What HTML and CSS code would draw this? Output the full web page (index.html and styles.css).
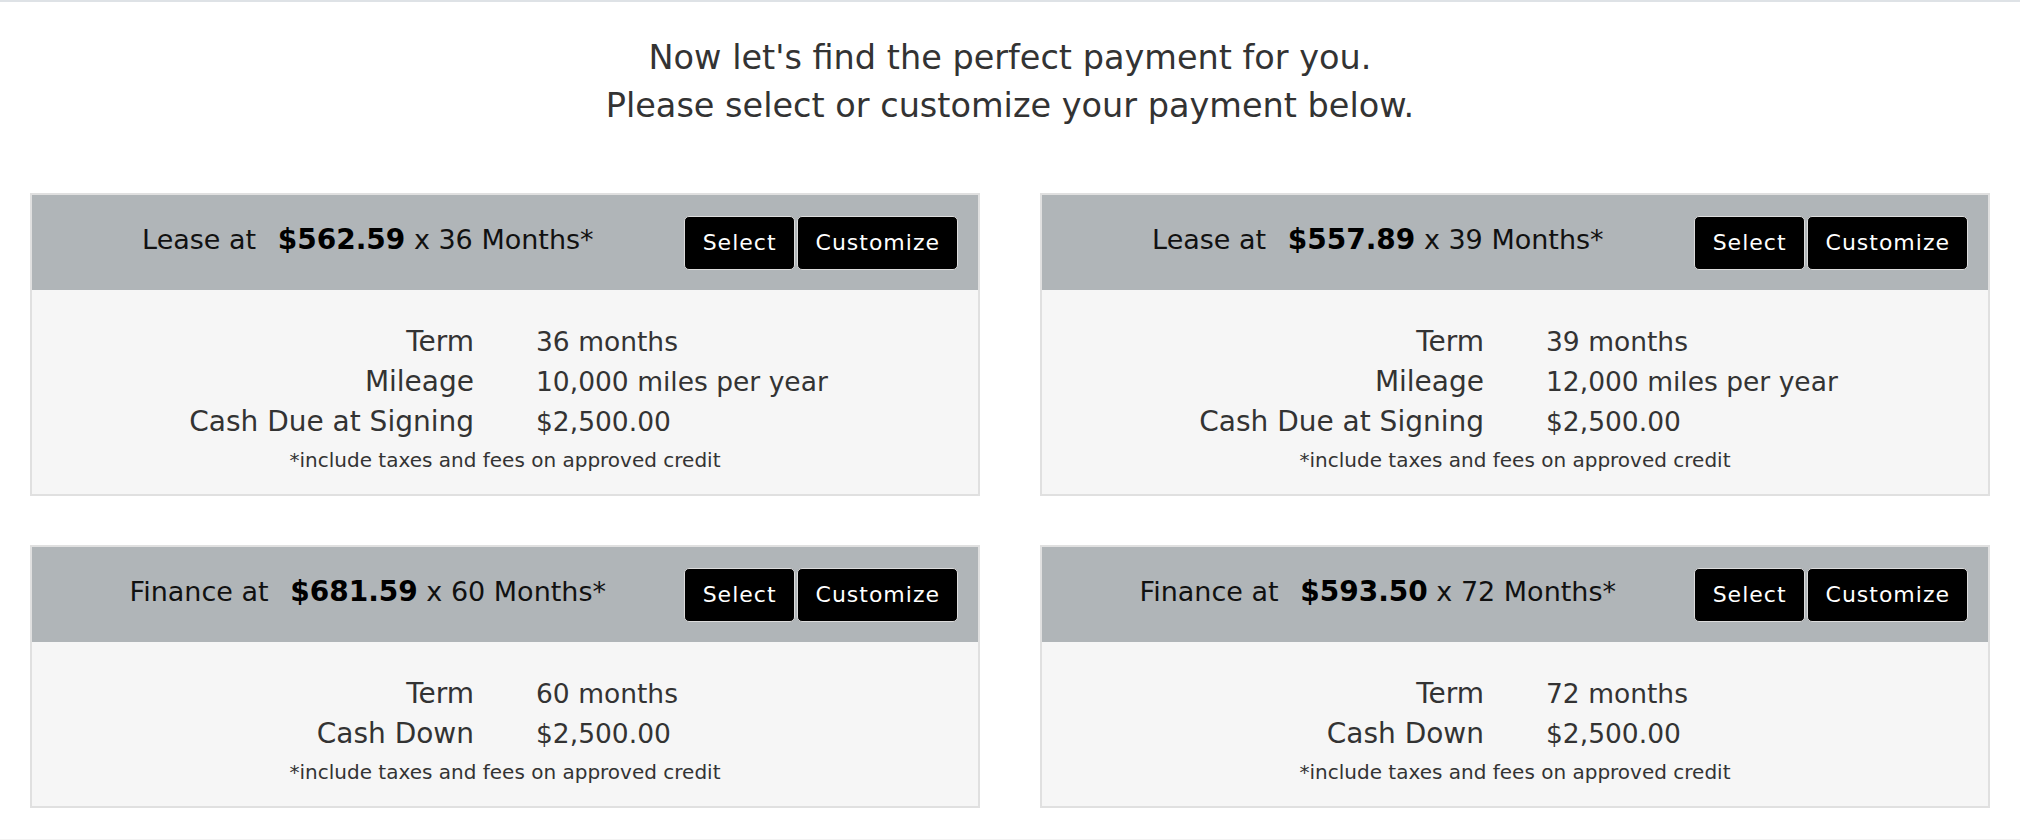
FILE: index.html
```html
<!DOCTYPE html>
<html>
<head>
  <meta charset="utf-8">
  <title>Payment Options</title>
  <link rel="stylesheet" href="styles.css">
</head>
<body>
  <main class="page">
    <h1 class="intro">Now let's find the perfect payment for you.<br>Please select or customize your payment below.</h1>

    <section class="plans">
      <article class="plan">
        <header class="plan-head">
          <div class="plan-title">Lease at <strong class="price">$562.59</strong> x 36 Months*</div>
          <div class="plan-actions">
            <button class="btn">Select</button>
            <button class="btn">Customize</button>
          </div>
        </header>
        <div class="plan-body">
          <dl class="terms">
            <dt>Term</dt><dd>36 months</dd>
            <dt>Mileage</dt><dd>10,000 miles per year</dd>
            <dt>Cash Due at Signing</dt><dd>$2,500.00</dd>
          </dl>
          <p class="note">*include taxes and fees on approved credit</p>
        </div>
      </article>

      <article class="plan">
        <header class="plan-head">
          <div class="plan-title">Lease at <strong class="price">$557.89</strong> x 39 Months*</div>
          <div class="plan-actions">
            <button class="btn">Select</button>
            <button class="btn">Customize</button>
          </div>
        </header>
        <div class="plan-body">
          <dl class="terms">
            <dt>Term</dt><dd>39 months</dd>
            <dt>Mileage</dt><dd>12,000 miles per year</dd>
            <dt>Cash Due at Signing</dt><dd>$2,500.00</dd>
          </dl>
          <p class="note">*include taxes and fees on approved credit</p>
        </div>
      </article>

      <article class="plan">
        <header class="plan-head">
          <div class="plan-title">Finance at <strong class="price">$681.59</strong> x 60 Months*</div>
          <div class="plan-actions">
            <button class="btn">Select</button>
            <button class="btn">Customize</button>
          </div>
        </header>
        <div class="plan-body">
          <dl class="terms">
            <dt>Term</dt><dd>60 months</dd>
            <dt>Cash Down</dt><dd>$2,500.00</dd>
          </dl>
          <p class="note">*include taxes and fees on approved credit</p>
        </div>
      </article>

      <article class="plan">
        <header class="plan-head">
          <div class="plan-title">Finance at <strong class="price">$593.50</strong> x 72 Months*</div>
          <div class="plan-actions">
            <button class="btn">Select</button>
            <button class="btn">Customize</button>
          </div>
        </header>
        <div class="plan-body">
          <dl class="terms">
            <dt>Term</dt><dd>72 months</dd>
            <dt>Cash Down</dt><dd>$2,500.00</dd>
          </dl>
          <p class="note">*include taxes and fees on approved credit</p>
        </div>
      </article>
    </section>
  </main>
  <footer class="foot"></footer>
</body>
</html>
```

FILE: styles.css
```css
body {
  margin: 0;
  border-top: 2px solid #dee2e6;
  background: #fff;
  color: #333;
  font-family: "DejaVu Sans", "Liberation Sans", sans-serif;
}

.page {
  padding: 32px 30px 31px;
}

.intro {
  margin: 0 0 63px 0;
  font-size: 33.5px;
  font-weight: 400;
  line-height: 48px;
  text-align: center;
  color: #333;
}

.plans {
  display: grid;
  grid-template-columns: 1fr 1fr;
  column-gap: 60px;
  row-gap: 49px;
  align-items: start;
}

.plan {
  border: 2px solid #e0e0e0;
  background: #f6f6f6;
}

.plan-head {
  display: flex;
  align-items: center;
  padding: 21px 20px 20px 20px;
  background: #b0b5b8;
}

.plan-title {
  flex: 1;
  margin-bottom: 8px;
  text-align: center;
  font-size: 27px;
  color: #111;
}

.price {
  margin-left: 13px;
  font-size: 28px;
  font-weight: 700;
  color: #000;
}

.plan-actions {
  display: flex;
  gap: 2px;
}

.btn {
  padding: 13px 17px 13px 18px;
  border: 1px solid #dcdcdc;
  border-radius: 5px;
  background: #000;
  color: #fff;
  font-family: inherit;
  font-size: 22px;
  letter-spacing: 1px;
  line-height: 26px;
  cursor: pointer;
}

.plan-body {
  padding: 32px 0 19px;
}

.terms {
  display: grid;
  grid-template-columns: 1fr 1fr;
  column-gap: 62px;
  margin: 0;
  font-size: 26.5px;
  line-height: 40px;
  color: #333;
}

.terms dt {
  text-align: right;
  font-size: 28px;
}

.terms dd {
  margin: 0;
}

.note {
  margin: 2px 0 0 0;
  font-size: 20px;
  line-height: 30px;
  text-align: center;
  color: #333;
}

.plan-body .terms + .note {
  margin-top: 3px;
}

.foot {
  height: 2px;
  background: #f3f3f3;
}
```
